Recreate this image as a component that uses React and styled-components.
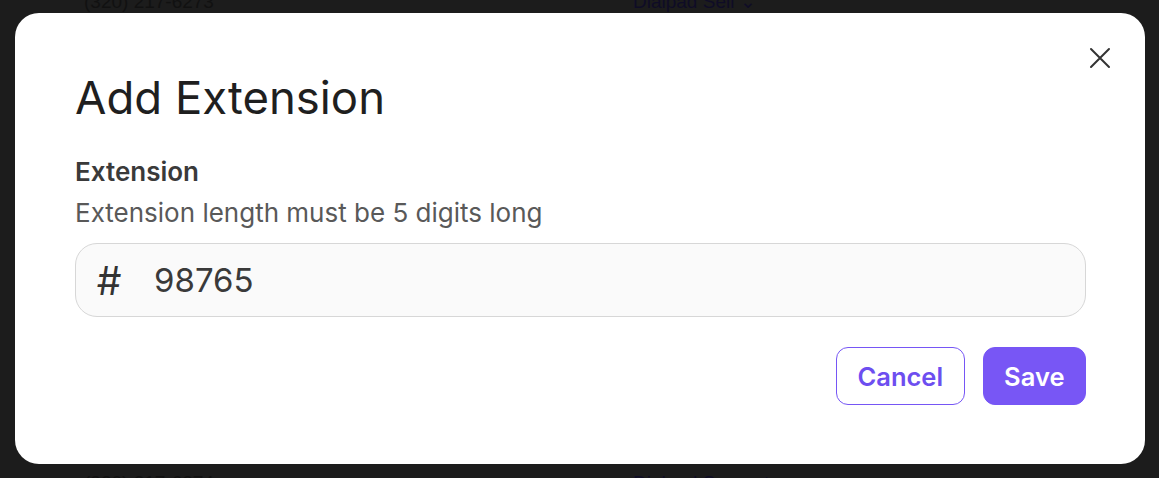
import React, { useState } from 'react';
import styled, { createGlobalStyle } from 'styled-components';

const GlobalStyle = createGlobalStyle`
  html, body {
    margin: 0;
    padding: 0;
    background: #1c1c1c;
    font-family: Inter, "Noto Sans", "Liberation Sans", sans-serif;
    overflow: hidden;
  }
`;

const Backdrop = styled.div`
  height: 478px;
  display: flex;
  flex-direction: column;
  justify-content: space-between;
  background: #1c1c1c;
`;

const BackRow = styled.div`
  display: grid;
  grid-template-columns: 549px 1fr;
  padding-left: 84px;
  height: 24px;
  margin-top: ${p => (p.$top ? '-10px' : '0')};
  margin-bottom: ${p => (p.$bottom ? '-17px' : '0')};
  font-family: "Liberation Sans Narrow", "Liberation Sans", sans-serif;
  font-size: 19px;
  line-height: 24px;
`;

const BackCell = styled.span`
  color: ${p => (p.$accent ? '#0f0c26' : '#111111')};
`;

const Overlay = styled.div`
  position: fixed;
  inset: 0;
  padding: 13px 14px 13px 15px;
  display: flex;
  align-items: flex-start;
`;

const Modal = styled.div`
  position: relative;
  width: 100%;
  box-sizing: border-box;
  background: #ffffff;
  border-radius: 24px;
  padding: 60px 59px 59px 60px;
  display: flex;
  flex-direction: column;
`;

const CloseButton = styled.button`
  position: absolute;
  top: 34px;
  right: 34px;
  width: 22px;
  height: 22px;
  padding: 0;
  border: none;
  background: none;
  display: flex;
  align-items: center;
  justify-content: center;
  cursor: pointer;
  color: #333333;
`;

const Title = styled.h2`
  margin: 0;
  font-size: 45.5px;
  line-height: 49px;
  font-weight: 400;
  color: #1f1f1f;
`;

const Label = styled.label`
  margin-top: 35px;
  font-size: 26px;
  line-height: 30px;
  font-weight: 600;
  color: #3a3a3a;
`;

const Hint = styled.p`
  margin: 11px 0 0;
  font-size: 26px;
  line-height: 30px;
  color: #595959;
`;

const Field = styled.div`
  margin-top: 15px;
  height: 74px;
  box-sizing: border-box;
  border: 1px solid #d7d7d7;
  border-radius: 22px;
  background: #fafafa;
  display: flex;
  align-items: center;
  padding: 0 18px;
  gap: 30px;
`;

const Hash = styled.span`
  font-size: 39px;
  font-weight: 400;
  color: #333333;
  width: 30px;
  text-align: center;
`;

const Input = styled.input`
  flex: 1;
  border: none;
  outline: none;
  background: transparent;
  font-family: inherit;
  font-size: 33px;
  color: #3a3a3a;
  padding: 0;
`;

const Actions = styled.div`
  margin-top: 30px;
  display: flex;
  justify-content: flex-end;
  gap: 18px;
`;

const Button = styled.button`
  height: 58px;
  box-sizing: border-box;
  padding: 0 20.5px;
  border-radius: 12px;
  font-family: inherit;
  font-size: 25.5px;
  font-weight: 600;
  cursor: pointer;
  border: 1px solid #7656f5;
  background: ${p => (p.$primary ? '#7856f5' : '#ffffff')};
  color: ${p => (p.$primary ? '#ffffff' : '#6d4ef0')};
`;

const CloseIcon = () => (
  <svg width="22" height="22" viewBox="0 0 22 22" fill="none">
    <path d="M2 2 L20 20 M20 2 L2 20" stroke="currentColor" strokeWidth="2" strokeLinecap="round" />
  </svg>
);

const App = () => {
  const [value, setValue] = useState('98765');

  return (
    <>
      <GlobalStyle />
      <Backdrop>
        <BackRow $top>
          <BackCell>(320) 217-6273</BackCell>
          <BackCell $accent>Dialpad Sell ⌄</BackCell>
        </BackRow>
        <BackRow $bottom>
          <BackCell>(320) 217-6274</BackCell>
          <BackCell $accent>Dialpad Support</BackCell>
        </BackRow>
      </Backdrop>
      <Overlay>
        <Modal>
          <CloseButton aria-label="Close">
            <CloseIcon />
          </CloseButton>
          <Title>Add Extension</Title>
          <Label htmlFor="ext">Extension</Label>
          <Hint>Extension length must be 5 digits long</Hint>
          <Field>
            <Hash>#</Hash>
            <Input id="ext" value={value} onChange={e => setValue(e.target.value)} />
          </Field>
          <Actions>
            <Button>Cancel</Button>
            <Button $primary>Save</Button>
          </Actions>
        </Modal>
      </Overlay>
    </>
  );
};

export default App;
